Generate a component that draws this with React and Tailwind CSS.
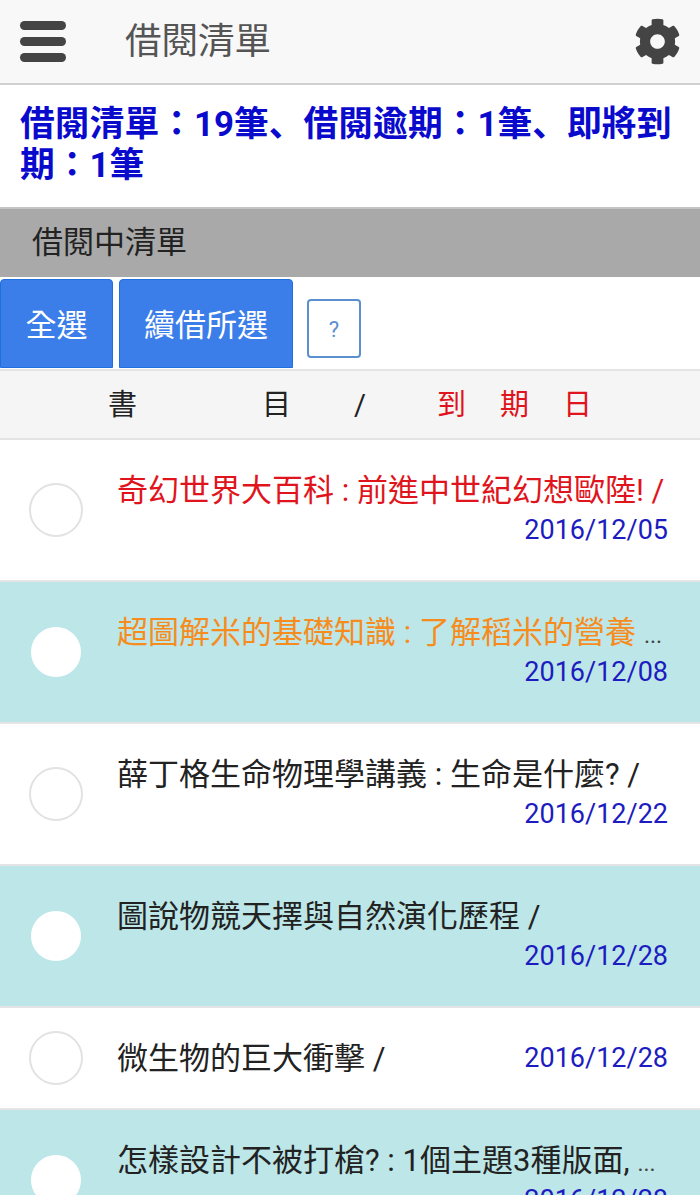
import React from 'react';
import { FaCog } from 'react-icons/fa';

const FONT = "font-['Roboto','Noto_Sans_CJK_TC',sans-serif]";

const BOOKS = [
    { title: '奇幻世界大百科 : 前進中世紀幻想歐陸! /', due: '2016/12/05', color: 'text-[#e0141c]' },
    { title: '超圖解米的基礎知識 : 了解稻米的營養', more: true, due: '2016/12/08', color: 'text-[#f78c1e]' },
    { title: '薛丁格生命物理學講義 : 生命是什麼? /', due: '2016/12/22', color: 'text-[#222]' },
    { title: '圖說物競天擇與自然演化歷程 /', due: '2016/12/28', color: 'text-[#222]' },
    { title: '微生物的巨大衝擊 /', due: '2016/12/28', color: 'text-[#222]' },
    { title: '怎樣設計不被打槍? : 1個主題3種版面,', more: true, due: '2016/12/28', color: 'text-[#222]' },
];

function BookRow({ book, odd }) {
    return (
        <li className={`flex items-center pl-[29px] pr-[32px] py-[23px] border-b-2 border-[#e4e4e4] ${odd ? 'bg-[#bce6e7]' : 'bg-white'}`}>
            <span className={`w-[54px] h-[54px] shrink-0 rounded-full bg-white border-2 ${odd ? 'border-[#bce6e7]' : 'border-[#e2e2e2]'}`} />
            <div className="flex flex-wrap flex-1 min-w-0 ml-[34px] items-center gap-y-[1px] pt-[8px] pb-[7px]">
                <span className={`block h-[39px] whitespace-nowrap text-[31px] leading-[39px] ${book.color}`}>
                    {book.title}
                    {book.more && <span className="ml-[8px] text-[23px] leading-none text-[#444]">...</span>}
                </span>
                <span className="ml-auto text-[27px] leading-[39px] text-[#1c1cc0]">{book.due}</span>
            </div>
        </li>
    );
}

export default function App() {
    return (
        <div className={`h-[1195px] w-[700px] overflow-hidden bg-white ${FONT}`}>
            {/* top bar */}
            <header className="h-[85px] flex items-center justify-between pl-[20px] pr-[19px] bg-[#f8f8f8] border-b-2 border-[#d0d0d0]">
                <div className="flex items-center">
                    <div className="w-[46px] flex flex-col gap-[7px]">
                        <span className="h-[9px] rounded-full bg-[#444]" />
                        <span className="h-[9px] rounded-full bg-[#444]" />
                        <span className="h-[9px] rounded-full bg-[#444]" />
                    </div>
                    <h1 className="ml-[59px] text-[36.5px] leading-[40px] text-[#555]">借閱清單</h1>
                </div>
                <FaCog className="w-[47px] h-[47px] text-[#444]" />
            </header>

            <p className="h-[122px] px-[20px] pt-[19px] text-[34.8px] leading-[41px] font-bold text-[#0a0acd] font-['Roboto','Noto_Sans_CJK_JP',sans-serif]">
                借閱清單：19筆、借閱逾期：1筆、即將到期：1筆
            </p>

            <div className="h-[70px] flex items-center pl-[32px] bg-[#a9a9a9] border-t-2 border-[#c4c4c4] text-[31px] text-[#222]">
                借閱中清單
            </div>

            {/* actions */}
            <div className="h-[92px] pt-[2px] flex items-start bg-white">
                <button className="w-[113px] h-[89px] pt-[5px] rounded-t-[4px] border border-[#1f6fe0] bg-[#3b7de9] text-white text-[31px]">全選</button>
                <button className="ml-[6px] w-[174px] h-[89px] pt-[5px] rounded-t-[4px] border border-[#1f6fe0] bg-[#3b7de9] text-white text-[31px]">續借所選</button>
                <button className="ml-[14px] mt-[20px] w-[54px] h-[59px] pt-[2px] rounded-[4px] border-2 border-[#5a8fd0] text-[#5a8fd0] text-[22px]">?</button>
            </div>

            <div className="h-[71px] flex items-center pl-[108px] pt-[3px] bg-[#f5f5f5] border-t-2 border-b-2 border-[#e4e4e4] text-[29px] text-[#222]">
                <span>書</span>
                <span className="ml-[125px]">目</span>
                <span className="ml-[63px]">/</span>
                <span className="ml-[71px] text-[#e0141c]">到</span>
                <span className="ml-[34px] text-[#e0141c]">期</span>
                <span className="ml-[34px] text-[#e0141c]">日</span>
            </div>

            <ul>
                {BOOKS.map((book, i) => (
                    <BookRow key={i} book={book} odd={i % 2 === 1} />
                ))}
            </ul>
        </div>
    );
}
